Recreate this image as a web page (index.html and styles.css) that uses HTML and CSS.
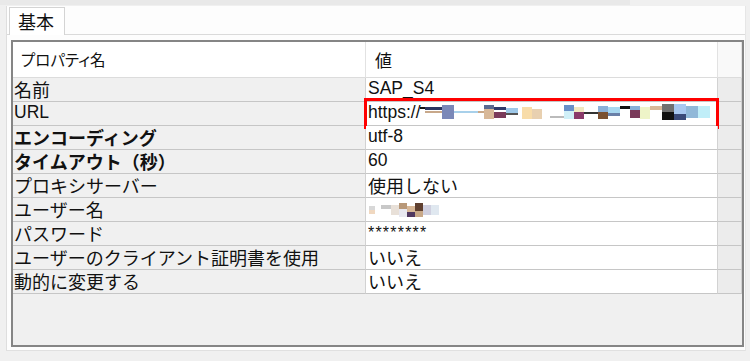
FILE: index.html
```html
<!DOCTYPE html>
<html>
  <head>
    <title>接続プロパティ</title>
    <link rel="stylesheet" href="styles.css">
  </head>
  <body>
    <div class="topbar"></div>
    <div class="window">
      <div class="tabs">
        <div class="tab">基本</div>
      </div>
      <div class="panel">
        <div class="grid">
          <div class="row head">
            <div class="key">プロパティ名</div>
            <div class="val">値</div>
            <div class="gutter"></div>
          </div>
          <div class="row">
            <div class="key">名前</div>
            <div class="val latin">SAP_S4</div>
            <div class="gutter"></div>
          </div>
          <div class="row">
            <div class="key latin">URL</div>
            <div class="val latin url">
              <span>https://</span>
              <svg class="blur" width="290" height="16" viewBox="0 0 290 16">
                <rect x="0" y="3" width="6" height="2" fill="#111"/>
                <rect x="5" y="3" width="20" height="3" fill="#2a3560"/>
                <rect x="5" y="7" width="20" height="2" fill="#c8a88a"/>
                <rect x="22" y="1" width="12" height="14" fill="#7b88b8"/>
                <rect x="34" y="7" width="24" height="2" fill="#a8d0ea"/>
                <rect x="58" y="7" width="6" height="2" fill="#c9a888"/>
                <rect x="64" y="1" width="10" height="14" fill="#d8b898"/>
                <rect x="64" y="1" width="10" height="4" fill="#5a6a90"/>
                <rect x="74" y="3" width="12" height="3" fill="#2e3b6a"/>
                <rect x="74" y="8" width="12" height="6" fill="#7a3a5a"/>
                <rect x="86" y="4" width="12" height="5" fill="#9ec8e8"/>
                <rect x="86" y="9" width="12" height="2" fill="#555"/>
                <rect x="102" y="3" width="10" height="12" fill="#f8dca8"/>
                <rect x="112" y="5" width="10" height="10" fill="#e8d0b0"/>
                <rect x="130" y="12" width="14" height="2" fill="#bbb"/>
                <rect x="144" y="1" width="10" height="6" fill="#6890c8"/>
                <rect x="144" y="7" width="10" height="8" fill="#d0f0f8"/>
                <rect x="154" y="3" width="10" height="12" fill="#f0e8c0"/>
                <rect x="154" y="8" width="10" height="7" fill="#8a3a6a"/>
                <rect x="164" y="8" width="14" height="2" fill="#333"/>
                <rect x="178" y="2" width="10" height="6" fill="#8ab0d8"/>
                <rect x="178" y="8" width="10" height="7" fill="#7a5030"/>
                <rect x="188" y="3" width="12" height="6" fill="#a8d8f0"/>
                <rect x="188" y="9" width="12" height="3" fill="#6a80a8"/>
                <rect x="200" y="2" width="10" height="3" fill="#111"/>
                <rect x="210" y="2" width="10" height="12" fill="#7a3a5a"/>
                <rect x="210" y="2" width="10" height="4" fill="#88b0d8"/>
                <rect x="220" y="3" width="10" height="12" fill="#eef4c8"/>
                <rect x="230" y="2" width="12" height="4" fill="#d8b898"/>
                <rect x="242" y="0" width="12" height="8" fill="#707070"/>
                <rect x="242" y="8" width="12" height="8" fill="#111"/>
                <rect x="254" y="0" width="12" height="10" fill="#a8c8f0"/>
                <rect x="254" y="10" width="12" height="6" fill="#3a4a78"/>
                <rect x="266" y="2" width="12" height="12" fill="#90b8d8"/>
                <rect x="278" y="2" width="12" height="12" fill="#c0eef8"/>
              </svg>
              <div class="mark"></div>
            </div>
            <div class="gutter"></div>
          </div>
          <div class="row">
            <div class="key bold">エンコーディング</div>
            <div class="val latin">utf-8</div>
            <div class="gutter"></div>
          </div>
          <div class="row">
            <div class="key bold">タイムアウト（秒）</div>
            <div class="val latin">60</div>
            <div class="gutter"></div>
          </div>
          <div class="row">
            <div class="key">プロキシサーバー</div>
            <div class="val">使用しない</div>
            <div class="gutter"></div>
          </div>
          <div class="row">
            <div class="key">ユーザー名</div>
            <div class="val">
              <svg class="blur" width="72" height="14" viewBox="0 0 72 14">
                <rect x="0" y="3" width="6" height="4" fill="#d8d8d8"/>
                <rect x="0" y="7" width="6" height="4" fill="#f0d8c0"/>
                <rect x="12" y="2" width="10" height="4" fill="#c8c8c8"/>
                <rect x="22" y="2" width="8" height="10" fill="#e8e0d8"/>
                <rect x="30" y="0" width="8" height="6" fill="#b89878"/>
                <rect x="30" y="6" width="8" height="8" fill="#e8e8f0"/>
                <rect x="38" y="3" width="8" height="6" fill="#d8b898"/>
                <rect x="38" y="9" width="8" height="5" fill="#503860"/>
                <rect x="46" y="0" width="8" height="8" fill="#604030"/>
                <rect x="46" y="8" width="8" height="6" fill="#c8a888"/>
                <rect x="54" y="2" width="8" height="10" fill="#d0d0e0"/>
                <rect x="62" y="2" width="8" height="10" fill="#e0e8f0"/>
              </svg>
            </div>
            <div class="gutter"></div>
          </div>
          <div class="row">
            <div class="key">パスワード</div>
            <div class="val latin small">********</div>
            <div class="gutter"></div>
          </div>
          <div class="row">
            <div class="key">ユーザーのクライアント証明書を使用</div>
            <div class="val">いいえ</div>
            <div class="gutter"></div>
          </div>
          <div class="row">
            <div class="key">動的に変更する</div>
            <div class="val">いいえ</div>
            <div class="gutter"></div>
          </div>
          <div class="filler"></div>
        </div>
      </div>
    </div>
  </body>
</html>
```

FILE: styles.css
```css
body {
  margin: 0;
  background-color: #f0f0f0;
  font-family: "Noto Sans CJK JP", "Liberation Sans", sans-serif;
  color: #111;
}
.topbar {
  height: 5px;
  background-color: #e9e9e9;
  margin-right: 120px;
}
.window {
  margin: 1px 4px 0 6px;
  background-color: #fdfdfd;
  border-left: 1px solid #dedede;
  border-right: 1px solid #e6e6e6;
  border-bottom: 1px solid #e0e0e0;
  padding-bottom: 1px;
}
.tabs {
  display: flex;
  padding: 1px 0 0 2px;
}
.tab {
  width: 56px;
  height: 28px;
  box-sizing: border-box;
  padding-left: 8px;
  font-size: 18px;
  line-height: 27px;
  background-color: #fff;
  border: 1px solid #d4d4d4;
  border-bottom: none;
  margin-bottom: -1px;
  position: relative;
}
.panel {
  border-top: 1px solid #dadada;
  padding: 5px 1px 2px 4px;
}
.grid {
  border: 2px solid #858585;
  box-shadow: inset 0 0 0 1px #c4c4c4;
  display: flex;
  flex-direction: column;
  height: 303px;
}
.row {
  display: grid;
  grid-template-columns: 353px 352px 1fr;
  height: 24px;
  box-sizing: border-box;
}
.row > div {
  border-bottom: 1px solid #c6c6c6;
  border-right: 1px solid #d2d2d2;
  font-size: 18px;
  line-height: 23px;
  white-space: nowrap;
  overflow: visible;
}
.key {
  background-color: #f0f0f0;
  padding-left: 1px;
}
.val {
  background-color: #fff;
  padding-left: 2px;
  position: relative;
  display: flex;
  align-items: center;
}
.gutter {
  background-color: #ececec;
}
.row.head {
  height: 36px;
}
.row.head > div {
  background-color: #fff;
  line-height: 35px;
  border-bottom: 1px solid #dcdcdc;
  border-right: 1px solid #e2e2e2;
}
.row.head .key {
  padding-left: 8px;
  font-size: 15.5px;
  font-feature-settings: "palt";
}
.row.head .val {
  padding-left: 9px;
  font-size: 17px;
}
.row.head .gutter {
  background-color: #f9f9f9;
}
.bold {
  font-weight: bold;
}
.row > .latin {
  font-family: "Liberation Sans", "Noto Sans CJK JP", sans-serif;
  font-size: 17.5px;
  line-height: 20px;
  align-items: flex-start;
}
.row > .small {
  font-size: 16px;
  letter-spacing: 1.2px;
  line-height: 22px;
}
.blur {
  display: block;
  margin-left: 1px;
}
.url .blur {
  margin-left: -1px;
  margin-top: 2px;
}
.mark {
  position: absolute;
  top: -4px;
  left: -2px;
  right: -2px;
  bottom: -4px;
  border: 3px solid #ff0000;
}
.filler {
  flex: 1;
  background-color: #f0f0f0;
}
```
